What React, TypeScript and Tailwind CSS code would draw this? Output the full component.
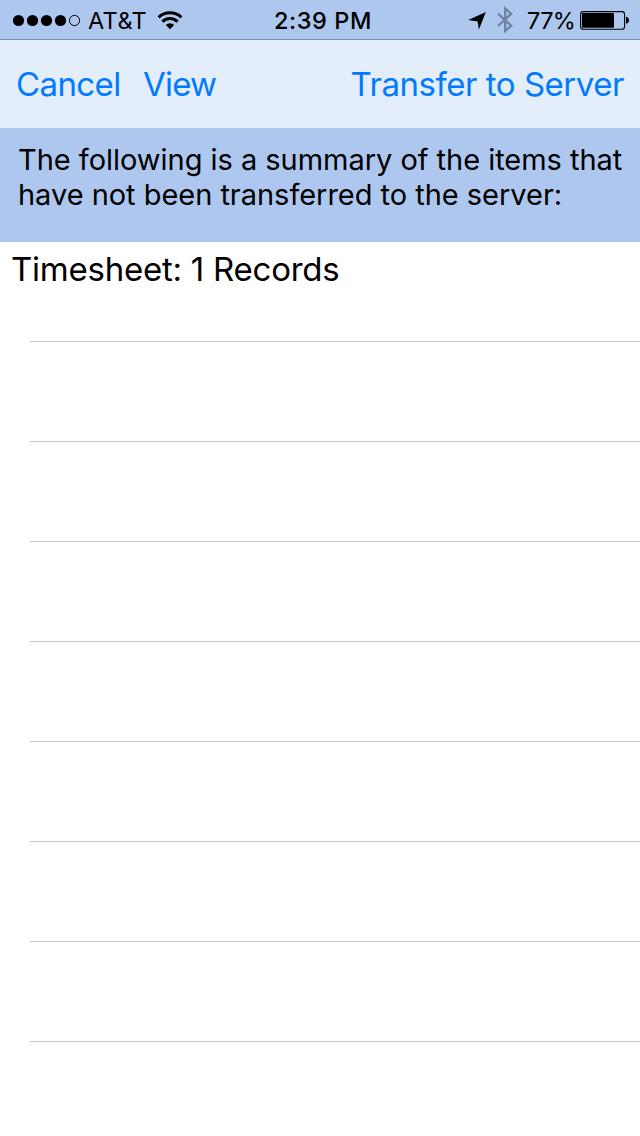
import React from "react";

function SignalDots() {
  return (
    <svg className="block" width="70" height="14" viewBox="0 0 70 14">
      {[6.5, 20.5, 34.5, 48.5].map((cx) => (
        <circle key={cx} cx={cx} cy="6.5" r="5.6" fill="#000" />
      ))}
      <circle cx="62.5" cy="6.5" r="5.1" fill="none" stroke="#000" strokeWidth="1" />
    </svg>
  );
}

function WifiIcon() {
  return (
    <svg className="block" width="26" height="20" viewBox="0 0 26 20">
      <g fill="none" stroke="#000" strokeWidth="3">
        <path d="M1.6 7.3 A16.4 16.4 0 0 1 24.4 7.3" />
        <path d="M5.4 11.6 A10.6 10.6 0 0 1 20.6 11.6" />
      </g>
      <path d="M8.8 15 A6 6 0 0 1 17.2 15 L13 19.2 Z" fill="#000" />
    </svg>
  );
}

function LocationIcon() {
  return (
    <svg className="block" width="18" height="18" viewBox="0 0 18 18">
      <path d="M17.9 0 L10.9 17.6 L9.6 9.4 L0.2 7.9 Z" fill="#000" />
    </svg>
  );
}

function BluetoothIcon() {
  return (
    <svg className="block" width="16" height="28" viewBox="0 0 16 28">
      <path
        d="M1 7.6 L14.2 19.8 L8.2 25 V2.6 L14.2 7.8 L1 20"
        fill="none"
        stroke="#6f829e"
        strokeWidth="2.3"
      />
    </svg>
  );
}

function BatteryIcon() {
  return (
    <svg className="block" width="50" height="19" viewBox="0 0 50 19">
      <rect x="0.6" y="0.6" width="44" height="17.6" rx="2.8" fill="none" stroke="#000" strokeWidth="1.1" />
      <rect x="2" y="2" width="32" height="14.8" rx="1" fill="#000" />
      <path d="M46 5.8 Q49 6.4 49 9.3 Q49 12.2 46 12.8 Z" fill="#000" />
    </svg>
  );
}

function StatusBar() {
  return (
    <header className="flex h-10 items-center justify-between border-b border-[#7a8fb0] bg-[#adc7ee] text-[23.5px] leading-[40px] whitespace-nowrap">
      <div className="flex w-[240px] items-center pt-0.5 pl-3">
        <SignalDots />
        <span className="ml-[6px] tracking-[0.4px]">AT&amp;T</span>
        <span className="-mt-px ml-[10px]">
          <WifiIcon />
        </span>
      </div>
      <div className="pt-0.5 pl-[6px] font-[550] tracking-[0.6px]">2:39 PM</div>
      <div className="flex w-[240px] items-center justify-end pt-0.5 pr-[10px]">
        <LocationIcon />
        <span className="-mt-px ml-[11px]">
          <BluetoothIcon />
        </span>
        <span className="ml-[14px] w-[53px] tracking-[-0.6px]">77%</span>
        <BatteryIcon />
      </div>
    </header>
  );
}

function NavBar() {
  return (
    <nav className="flex h-[88px] items-center bg-[#e4eefb] px-4 pt-0.5 text-[33px] whitespace-nowrap text-[#007aff]">
      <button className="w-[127px] text-left tracking-[-0.6px]">Cancel</button>
      <button className="tracking-[-0.8px]">View</button>
      <button className="ml-auto tracking-[-0.47px]">Transfer to Server</button>
    </nav>
  );
}

const rows = ["Timesheet: 1 Records", "", "", "", "", "", "", ""];

export default function App() {
  return (
    <div className="h-[1136px] w-[640px] overflow-hidden bg-white font-['Inter',sans-serif] text-black">
      <StatusBar />
      <NavBar />
      <section className="h-[114px] bg-[#adc7ee] pt-[14px] pl-[18px] text-[29px] leading-[35px] tracking-[-0.03px] whitespace-nowrap">
        <p>The following is a summary of the items that</p>
        <p>have not been transferred to the server:</p>
      </section>
      <ul>
        {rows.map((label, i) => (
          <li key={i} className="flex h-[100px] flex-col justify-between">
            <span className="pl-[11px] text-[33px] leading-[54px] tracking-[-0.24px] whitespace-nowrap">{label}</span>
            <div className="ml-[30px] h-px bg-[#c8c7cc]" />
          </li>
        ))}
      </ul>
    </div>
  );
}
